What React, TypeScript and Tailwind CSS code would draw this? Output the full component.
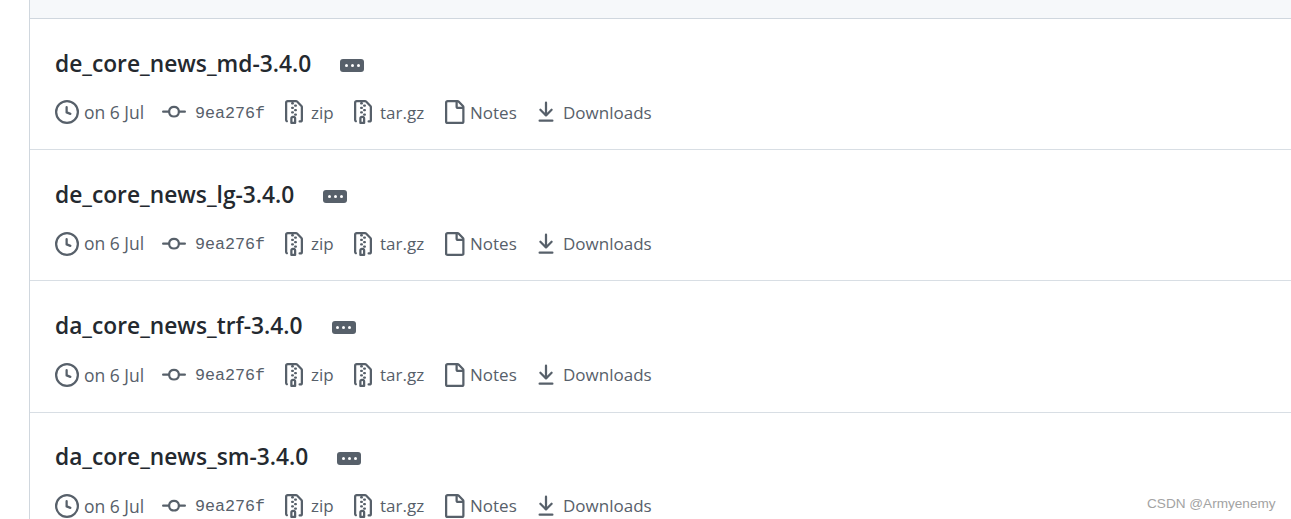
import React from 'react';

const ICONS = {
    clock: 'M8 0a8 8 0 1 1 0 16A8 8 0 0 1 8 0ZM1.5 8a6.5 6.5 0 1 0 13 0 6.5 6.5 0 0 0-13 0Zm7-3.25v2.992l2.028.812a.75.75 0 0 1-.557 1.392l-2.5-1A.751.751 0 0 1 7 8.25v-3.5a.75.75 0 0 1 1.5 0Z',
    commit: 'M11.93 8.5a4.002 4.002 0 0 1-7.86 0H.75a.75.75 0 0 1 0-1.5h3.32a4.002 4.002 0 0 1 7.86 0h3.32a.75.75 0 0 1 0 1.5Zm-1.43-.75a2.5 2.5 0 1 0-5 0 2.5 2.5 0 0 0 5 0Z',
    zip: 'M3.5 1.75v11.5c0 .09.048.173.126.217a.75.75 0 0 1-.752 1.298A1.748 1.748 0 0 1 2 13.25V1.75C2 .784 2.784 0 3.75 0h5.586c.464 0 .909.185 1.237.513l2.914 2.914c.329.328.513.773.513 1.237v8.586A1.75 1.75 0 0 1 12.25 15h-.5a.75.75 0 0 1 0-1.5h.5a.25.25 0 0 0 .25-.25V4.664a.25.25 0 0 0-.073-.177L9.513 1.573a.25.25 0 0 0-.177-.073H7.25a.75.75 0 0 1 0 1.5h-.5a.75.75 0 0 1 0-1.5h-3a.25.25 0 0 0-.25.25Zm3.75 8.75h.5c.966 0 1.75.784 1.75 1.75v3a.75.75 0 0 1-.75.75h-2.5a.75.75 0 0 1-.75-.75v-3c0-.966.784-1.75 1.75-1.75ZM6 5.25a.75.75 0 0 1 .75-.75h.5a.75.75 0 0 1 0 1.5h-.5A.75.75 0 0 1 6 5.25Zm.75 2.25h.5a.75.75 0 0 1 0 1.5h-.5a.75.75 0 0 1 0-1.5ZM8 6.75A.75.75 0 0 1 8.75 6h.5a.75.75 0 0 1 0 1.5h-.5A.75.75 0 0 1 8 6.75ZM8.75 3h.5a.75.75 0 0 1 0 1.5h-.5a.75.75 0 0 1 0-1.5ZM8 9.75A.75.75 0 0 1 8.75 9h.5a.75.75 0 0 1 0 1.5h-.5A.75.75 0 0 1 8 9.75Zm-1 2.5v2.25h1v-2.25a.25.25 0 0 0-.25-.25h-.5a.25.25 0 0 0-.25.25Z',
    file: 'M2 1.75C2 .784 2.784 0 3.75 0h6.586c.464 0 .909.184 1.237.513l2.914 2.914c.329.328.513.773.513 1.237v9.586A1.75 1.75 0 0 1 13.25 16h-9.5A1.75 1.75 0 0 1 2 14.25Zm1.75-.25a.25.25 0 0 0-.25.25v12.5c0 .138.112.25.25.25h9.5a.25.25 0 0 0 .25-.25V6h-2.75A1.75 1.75 0 0 1 9 4.25V1.5Zm6.75.062V4.25c0 .138.112.25.25.25h2.688l-.011-.013-2.914-2.914-.013-.011Z',
    download: 'M7.47 10.78a.75.75 0 001.06 0l3.75-3.75a.75.75 0 00-1.06-1.06L8.75 8.44V1.75a.75.75 0 00-1.5 0v6.69L4.78 5.97a.75.75 0 00-1.06 1.06l3.75 3.75zM3.75 13a.75.75 0 000 1.5h8.5a.75.75 0 000-1.5h-8.5z',
};

const Icon = ({ name }: { name: keyof typeof ICONS }) => (
    <svg viewBox="0 0 16 16" className="w-6 h-6 shrink-0 fill-[#57606a]">
        <path fillRule="evenodd" d={ICONS[name]} />
    </svg>
);

const releases = ['de_core_news_md-3.4.0', 'de_core_news_lg-3.4.0', 'da_core_news_trf-3.4.0', 'da_core_news_sm-3.4.0'];

const Release = ({ name }: { name: string }) => (
    <div className="h-[131.2px] shrink-0 border-b border-[#d8dee4] pl-[25px] pt-[25px]">
        <div className="flex items-center h-[38px]">
            <h2 className="mt-[2px] text-[22.75px] font-semibold text-[#24292f] leading-none">{name}</h2>
            <span className="ml-[29px] mt-1 flex items-center justify-center gap-[3px] w-6 h-[13px] rounded-[3px] bg-[#57606a]">
                <i className="w-[3px] h-[3px] rounded-full bg-white" />
                <i className="w-[3px] h-[3px] rounded-full bg-white" />
                <i className="w-[3px] h-[3px] rounded-full bg-white" />
            </span>
        </div>
        <div className="flex items-center mt-[18.4px] h-6 text-[17px] text-[#57606a]">
            <Icon name="clock" />
            <span className="ml-[5px] w-[78px] text-[17.5px]">on 6 Jul</span>
            <Icon name="commit" />
            <span className="ml-[9px] mt-[2px] w-[87px] text-[16.7px] font-['Liberation_Mono',monospace]">9ea276f</span>
            <Icon name="zip" />
            <span className="ml-[5px] w-[40px]">zip</span>
            <Icon name="zip" />
            <span className="ml-[5px] w-[62px]">tar.gz</span>
            <Icon name="file" />
            <span className="ml-1 w-[64px]">Notes</span>
            <Icon name="download" />
            <span className="ml-[5px]">Downloads</span>
        </div>
    </div>
);

export default function App() {
    return (
        <div className="relative h-[519px] overflow-hidden bg-white font-['Open_Sans','Noto_Sans',sans-serif]">
            <div className="ml-[29px] h-full border-l border-[#d0d7de]">
                <div className="h-[19px] bg-[#f6f8fa] border-b border-[#d0d7de]" />
                {releases.map((r) => (
                    <Release key={r} name={r} />
                ))}
            </div>
            <span className="absolute left-[1147px] top-[494px] text-[13.6px] text-[#a3a3a3] font-['Liberation_Sans',sans-serif]">
                CSDN @Armyenemy
            </span>
        </div>
    );
}
